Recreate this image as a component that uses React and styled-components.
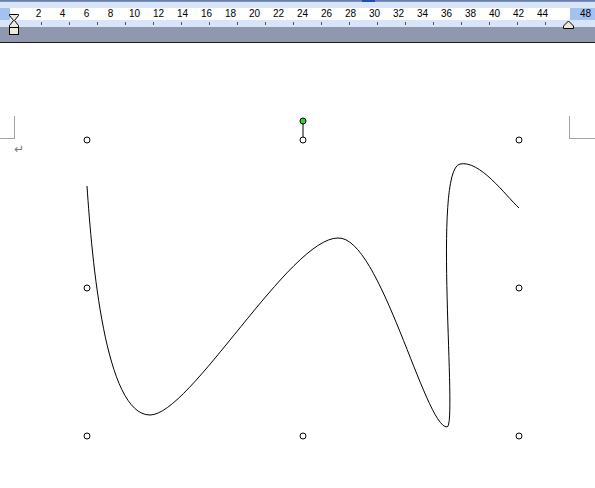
import React from "react";
import styled, { createGlobalStyle } from "styled-components";

const Global = createGlobalStyle`
  html, body { margin: 0; padding: 0; background: #ffffff; }
  body { width: 595px; height: 488px; overflow: hidden; font-family: "Liberation Sans", Arial, sans-serif; }
`;

const Frame = styled.div`
  width: 595px;
  height: 488px;
  display: flex;
  flex-direction: column;
  background: #fff;
`;

const TopStrip = styled.div`
  height: 8px;
  background: #d8e4f8;
  border-top: 1px solid #5b7fc4;
  box-sizing: border-box;
  position: relative;
  &::before {
    content: "";
    display: block;
    height: 1px;
    background: #8a93a6;
  }
  &::after {
    content: "";
    position: absolute;
    top: -1px;
    left: 362px;
    width: 13px;
    height: 2px;
    background: #1e4fb0;
  }
`;

const RulerRow = styled.div`
  height: 12px;
  display: flex;
  position: relative;
`;

const Margin = styled.div`
  width: ${(p) => p.$w}px;
  background: #a3c2f1;
  flex: none;
`;

const Scale = styled.div`
  flex: 1;
  background: #ffffff;
  display: flex;
  padding-left: 16.5px;
`;

const Num = styled.div`
  width: 24px;
  flex: none;
  text-align: center;
  font-size: 10px;
  line-height: 12px;
  color: #000;
`;

const RightNums = styled.div`
  display: flex;
  align-items: center;
  padding-left: 10px;
  font-size: 10px;
  line-height: 12px;
`;

const TickRow = styled.div`
  height: 7px;
  background: #d8e4f8;
  display: flex;
  padding-left: 14px;
`;

const TickCell = styled.div`
  width: 28px;
  flex: none;
  position: relative;
  &::after {
    content: "";
    position: absolute;
    left: 27px;
    top: 2px;
    width: 1px;
    height: 3px;
    background: #555;
  }
`;

const GrayBand = styled.div`
  height: 15px;
  background: #8f98ae;
  border-bottom: 1px solid #1a1a1a;
`;

const Marker = styled.svg`
  position: absolute;
  left: 9px;
  top: 6px;
`;

const RightMarker = styled.svg`
  position: absolute;
  left: 563px;
  top: 12px;
`;

const Page = styled.div`
  flex: 1;
  position: relative;
  padding-top: 73px;
`;

const CornerRow = styled.div`
  display: flex;
  justify-content: space-between;
`;

const Corner = styled.div`
  width: ${(p) => p.$w}px;
  height: 23px;
  box-sizing: border-box;
  border-bottom: 1px solid #a3a3a3;
  ${(p) => (p.$side === "left" ? "border-right: 1px solid #a3a3a3;" : "border-left: 1px solid #a3a3a3;")}
`;

const Pilcrow = styled.div`
  margin: 4px 0 0 14px;
  font-family: "DejaVu Sans", sans-serif;
  font-size: 12px;
  line-height: 12px;
  color: #777;
`;

const Drawing = styled.svg`
  position: absolute;
  left: 0;
  top: 0;
`;

const handles = [
  [87, 140], [303, 140], [519, 140],
  [87, 288], [519, 288],
  [87, 436], [303, 436], [519, 436],
];

export default function App() {
  const nums = [];
  for (let n = 2; n <= 44; n += 2) nums.push(n);
  const ticks = Array.from({ length: 19 });
  return (
    <>
      <Global />
      <Frame>
        <TopStrip />
        <RulerRow>
          <Margin $w={10} />
          <Scale>
            {nums.map((n) => (
              <Num key={n}>{n}</Num>
            ))}
          </Scale>
          <Margin $w={25}>
            <RightNums>48</RightNums>
          </Margin>
          <Marker width="12" height="22" viewBox="0 0 12 22">
            <path d="M0.5 0.5 H9.5 V1.5 L5.5 6.5 L9.5 11.5 V13.5 H0.5 V11.5 L4.5 6.5 L0.5 1.5 Z" fill="#ece9d8" stroke="#000" />
            <rect x="0.5" y="13.5" width="9" height="7" fill="#ece9d8" stroke="#000" />
          </Marker>
          <RightMarker width="12" height="10" viewBox="0 0 12 10">
            <path d="M0.5 8.5 V6 L5.5 1 L10.5 6 V8.5 Z" fill="#ece9d8" stroke="#000" />
          </RightMarker>
        </RulerRow>
        <TickRow>
          {ticks.map((_, i) => (
            <TickCell key={i} />
          ))}
        </TickRow>
        <GrayBand />
        <Page>
          <CornerRow>
            <Corner $side="left" $w={15} />
            <Corner $side="right" $w={26} />
          </CornerRow>
          <Pilcrow>↵</Pilcrow>
          <Drawing width="595" height="445" viewBox="0 43 595 445">
            <path
              d="M87 186 C92 260 105 415 150 415 C190 415 290 238 338 238 C380 236 425 427 447 427 C458 427 432 170 460 164 C480 160 505 195 519 208"
              fill="none"
              stroke="#000"
              strokeWidth="1"
            />
            <line x1="303" y1="124" x2="303" y2="137" stroke="#000" />
            <circle cx="303" cy="121" r="3" fill="#22dd22" stroke="#000" />
            {handles.map(([x, y], i) => (
              <circle key={i} cx={x} cy={y} r="3" fill="#fff" stroke="#000" />
            ))}
          </Drawing>
        </Page>
      </Frame>
    </>
  );
}
